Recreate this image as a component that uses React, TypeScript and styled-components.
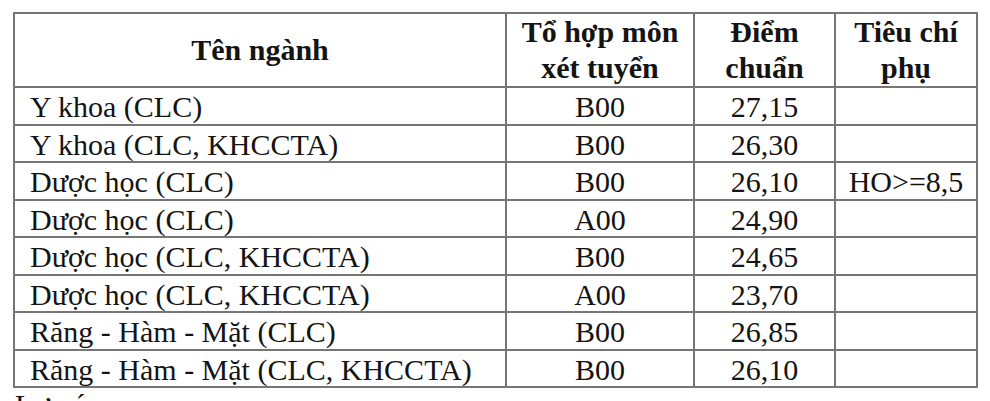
import React from "react";
import styled, { createGlobalStyle } from "styled-components";

const GlobalStyle = createGlobalStyle`
  html, body {
    margin: 0;
    padding: 0;
    background: #ffffff;
  }
  body {
    font-family: "Liberation Serif", "Times New Roman", serif;
    color: #141414;
  }
`;

const Page = styled.div`
  padding: 12px 0 0 13px;
  width: 990px;
  height: 401px;
  box-sizing: border-box;
  overflow: hidden;
  font-family: "Liberation Serif", "Times New Roman", serif;
`;

const Table = styled.table`
  border-collapse: collapse;
  table-layout: fixed;
  width: 963px;
  font-family: "Liberation Serif", "Times New Roman", serif;
  font-size: 30px;
  color: #141414;
`;

const Th = styled.th`
  border: 2px solid #767676;
  font-family: "Liberation Serif", "Times New Roman", serif;
  font-weight: 700;
  line-height: 36px;
  padding: 0;
  text-align: center;
  vertical-align: middle;
  height: 72px;
`;

const Td = styled.td<{ $align?: "left" | "center" }>`
  border: 2px solid #767676;
  font-family: "Liberation Serif", "Times New Roman", serif;
  font-weight: 400;
  line-height: 32px;
  padding: 3px 0 0 ${(p) => (p.$align === "left" ? "15px" : "0")};
  text-align: ${(p) => p.$align ?? "center"};
  vertical-align: middle;
  height: 37.5px;
  box-sizing: border-box;
  white-space: nowrap;
`;

const Note = styled.p`
  margin: 0;
  padding-left: 2px;
  font-family: "Liberation Serif", "Times New Roman", serif;
  font-size: 30px;
  line-height: 34px;
  color: #141414;
`;

type Row = { name: string; combo: string; score: string; extra?: string };

const rows: Row[] = [
  { name: "Y khoa (CLC)", combo: "B00", score: "27,15" },
  { name: "Y khoa (CLC, KHCCTA)", combo: "B00", score: "26,30" },
  { name: "Dược học (CLC)", combo: "B00", score: "26,10", extra: "HO>=8,5" },
  { name: "Dược học (CLC)", combo: "A00", score: "24,90" },
  { name: "Dược học (CLC, KHCCTA)", combo: "B00", score: "24,65" },
  { name: "Dược học (CLC, KHCCTA)", combo: "A00", score: "23,70" },
  { name: "Răng - Hàm - Mặt (CLC)", combo: "B00", score: "26,85" },
  { name: "Răng - Hàm - Mặt (CLC, KHCCTA)", combo: "B00", score: "26,10" },
];

export default function App() {
  return (
    <>
      <GlobalStyle />
      <Page>
        <Table>
          <colgroup>
            <col style={{ width: 492 }} />
            <col style={{ width: 188 }} />
            <col style={{ width: 141 }} />
            <col style={{ width: 142 }} />
          </colgroup>
          <thead>
            <tr>
              <Th>Tên ngành</Th>
              <Th>
                Tổ hợp môn
                <br />
                xét tuyển
              </Th>
              <Th>
                Điểm
                <br />
                chuẩn
              </Th>
              <Th>
                Tiêu chí
                <br />
                phụ
              </Th>
            </tr>
          </thead>
          <tbody>
            {rows.map((r, i) => (
              <tr key={i}>
                <Td $align="left">{r.name}</Td>
                <Td>{r.combo}</Td>
                <Td>{r.score}</Td>
                <Td>{r.extra ?? ""}</Td>
              </tr>
            ))}
          </tbody>
        </Table>
        <Note>Lưu ý:</Note>
      </Page>
    </>
  );
}
